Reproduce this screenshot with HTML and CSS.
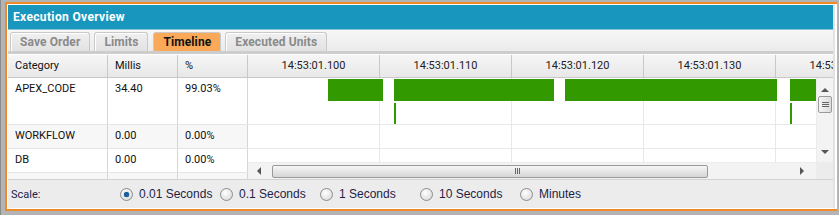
FILE: index.html
```html
<!DOCTYPE html>
<html lang="en">
<head>
    <meta charset="UTF-8">
    <title>Execution Overview</title>
    <link rel="stylesheet" href="styles.css">
</head>
<body>

<div class="frame">
  <div class="panel">
    <div class="title">Execution Overview</div>

    <div class="tabbar">
        <div class="tab">Save Order</div>
        <div class="tab">Limits</div>
        <div class="tab active">Timeline</div>
        <div class="tab">Executed Units</div>
    </div>

    <div class="main">
        <div class="grid">
            <div class="row head">
                <div class="cell cat">Category</div>
                <div class="cell ms">Millis</div>
                <div class="cell pct">%</div>
            </div>
            <div class="row tall">
                <div class="cell cat">APEX_CODE</div>
                <div class="cell ms">34.40</div>
                <div class="cell pct">99.03%</div>
            </div>
            <div class="row alt">
                <div class="cell cat">WORKFLOW</div>
                <div class="cell ms">0.00</div>
                <div class="cell pct">0.00%</div>
            </div>
            <div class="row">
                <div class="cell cat">DB</div>
                <div class="cell ms">0.00</div>
                <div class="cell pct">0.00%</div>
            </div>
            <div class="row alt">
                <div class="cell cat"></div>
                <div class="cell ms"></div>
                <div class="cell pct"></div>
            </div>
        </div>

        <div class="timeline">
            <div class="tl-head">
                <div class="tick">14:53:01.100</div>
                <div class="tick">14:53:01.110</div>
                <div class="tick">14:53:01.120</div>
                <div class="tick">14:53:01.130</div>
                <div class="tick">14:53:01.140</div>
            </div>
            <div class="tl-view">
                <div class="chart">
                    <div class="lane tall">
                        <div class="bar" style="left: 80px; width: 55px;"></div>
                        <div class="bar" style="left: 146px; width: 160px;"></div>
                        <div class="bar" style="left: 317px; width: 212px;"></div>
                        <div class="bar" style="left: 542px; width: 40px;"></div>
                        <div class="bar thin" style="left: 146px;"></div>
                        <div class="bar thin" style="left: 542px;"></div>
                    </div>
                    <div class="lane"></div>
                    <div class="lane"></div>
                </div>
                <div class="vscroll">
                    <div class="arrow up"></div>
                    <div class="vthumb"><span></span><span></span><span></span></div>
                    <div class="vtrack"></div>
                    <div class="arrow down"></div>
                </div>
            </div>
            <div class="hscroll-row">
                <div class="hscroll">
                    <div class="arrow left"></div>
                    <div class="hthumb"><span></span><span></span><span></span></div>
                    <div class="htrack"></div>
                    <div class="arrow right"></div>
                </div>
                <div class="corner"></div>
            </div>
        </div>
    </div>

    <div class="footer">
        <div class="scale-label">Scale:</div>
        <label class="opt"><span class="radio checked"></span>0.01 Seconds</label>
        <label class="opt"><span class="radio"></span>0.1 Seconds</label>
        <label class="opt"><span class="radio"></span>1 Seconds</label>
        <label class="opt"><span class="radio"></span>10 Seconds</label>
        <label class="opt"><span class="radio"></span>Minutes</label>
    </div>
  </div>
</div>

</body>
</html>
```

FILE: styles.css
```css
body {
    margin: 0;
    background: #b4b4b4;
    font-family: Roboto, "Liberation Sans", sans-serif;
    font-size: 11px;
    color: #111;
    border-left: 1px solid #8a8a8a;
    height: 215px;
    overflow: hidden;
}
.frame {
    margin: 2px 0 0 4px;
    width: 830px;
    border: 2px solid #ee8a2b;
    border-right: none;
    background: #fff;
}
.panel {
    border: 1px solid #fff;
    border-right: 2px solid #e2e2e2;
    width: 825px;
}
.title {
    height: 24px;
    line-height: 24px;
    background: #1896be;
    border-bottom: 1px solid #8ac4da;
    color: #fff;
    font-weight: bold;
    font-size: 12px;
    letter-spacing: 0.35px;
    padding-left: 5px;
}
.tabbar {
    height: 19px;
    padding: 2px 0 0 2px;
    display: flex;
    gap: 4px;
    background: linear-gradient(#f7f7f7, #ebebeb);
    border-bottom: 3px solid #cdcdcd;
}
.tab {
    height: 18px;
    line-height: 19px;
    padding: 0 9px;
    border: 1px solid #c9c9c9;
    border-bottom: none;
    border-radius: 3px 3px 0 0;
    background: linear-gradient(#f0f0f0, #e2e2e2);
    box-shadow: inset 1px 1px 0 #fff;
    color: #8a8a8a;
    font-weight: bold;
    font-size: 12px;
    letter-spacing: 0.1px;
}
.tab.active {
    background: #f9a958;
    box-shadow: none;
    color: #111;
    margin-left: 1px;
}
.main {
    height: 124px;
    margin-top: 1px;
    display: flex;
    overflow: hidden;
    border-bottom: 1px solid #d2d2d2;
}
.grid {
    width: 240px;
    flex: none;
}
.row {
    display: flex;
    height: 23px;
    border-bottom: 1px solid #e4e4e4;
    background: #fff;
}
.row.alt {
    background: #f7f7f7;
}
.row.tall {
    height: 46px;
}
.row.head {
    height: 22px;
    background: linear-gradient(#f6f6f6, #e8e8e8);
    border-bottom: 1px solid #c8c8c8;
    line-height: 22px;
}
.cell {
    border-right: 1px solid #d6d6d6;
    padding: 4px 0 0 7px;
    box-sizing: border-box;
}
.row.head .cell {
    padding-top: 0;
    border-right-color: #c8c8c8;
}
.cat { width: 100px; }
.ms { width: 70px; }
.pct { width: 70px; }
.timeline {
    width: 585px;
    flex: none;
}
.tl-head {
    display: flex;
    height: 22px;
    line-height: 22px;
    overflow: hidden;
    background: linear-gradient(#f6f6f6, #e8e8e8);
    border-bottom: 1px solid #c8c8c8;
}
.tick {
    width: 132px;
    flex: none;
    text-align: center;
    border-right: 1px solid #c8c8c8;
    box-sizing: border-box;
    color: #222;
}
.tl-view {
    display: flex;
    height: 84px;
}
.chart {
    width: 568px;
    overflow: hidden;
    background: repeating-linear-gradient(90deg, transparent 0 131px, #e8e8e8 131px 132px);
}
.lane {
    position: relative;
    height: 23px;
    border-bottom: 1px solid #e8e8e8;
}
.lane.tall {
    height: 46px;
}
.bar {
    position: absolute;
    top: 1px;
    height: 22px;
    background: #339900;
}
.bar.thin {
    top: 25px;
    height: 21px;
    width: 2px;
}
.vscroll {
    width: 17px;
    display: flex;
    flex-direction: column;
    background: #f3f3f3;
    border-left: 1px solid #ececec;
    box-sizing: border-box;
}
.arrow {
    width: 0;
    height: 0;
    margin: 0 auto;
    border: 4px solid transparent;
}
.arrow.up {
    border-bottom: 4px solid #555;
    margin-top: 6px;
    margin-bottom: 4px;
}
.arrow.down {
    border-top: 4px solid #555;
    margin-bottom: 4px;
}
.vthumb {
    margin: 0 1px;
    height: 15px;
    border: 1px solid #9a9a9a;
    border-radius: 2px;
    background: linear-gradient(90deg, #f4f4f4, #dcdcdc);
    display: flex;
    flex-direction: column;
    align-items: center;
    justify-content: center;
    gap: 1px;
}
.vthumb span {
    width: 7px;
    height: 1px;
    background: #666;
}
.vtrack {
    flex: 1;
}
.hscroll-row {
    display: flex;
    height: 17px;
}
.hscroll {
    width: 568px;
    display: flex;
    align-items: center;
    background: #f3f3f3;
    border-top: 1px solid #ececec;
    box-sizing: border-box;
}
.arrow.left {
    border-right: 4px solid #555;
    margin: 0 4px 0 5px;
}
.arrow.right {
    border-left: 4px solid #555;
    margin: 0 8px 0 0;
}
.hthumb {
    width: 436px;
    height: 13px;
    margin-left: 7px;
    border: 1px solid #9a9a9a;
    border-radius: 2px;
    background: linear-gradient(#f6f6f6, #d6d6d6);
    display: flex;
    justify-content: center;
    align-items: center;
    gap: 1px;
    padding-left: 54px;
    box-sizing: border-box;
}
.hthumb span {
    width: 1px;
    height: 6px;
    background: #666;
}
.htrack {
    flex: 1;
}
.corner {
    width: 17px;
    background: #ececec;
}
.footer {
    height: 28px;
    display: flex;
    align-items: center;
    background: #ececec;
    padding-left: 3px;
}
.scale-label {
    width: 109px;
    color: #1e1e48;
}
.opt {
    width: 100px;
    display: flex;
    align-items: center;
    font-family: "Liberation Sans", Arial, sans-serif;
    font-size: 12px;
    color: #1e1e48;
}
.radio {
    width: 11px;
    height: 11px;
    border: 1px solid #8c8c8c;
    border-radius: 50%;
    background: radial-gradient(circle at 40% 35%, #ffffff, #d4d4d4);
    margin-right: 6px;
    position: relative;
}
.radio.checked::after {
    content: "";
    position: absolute;
    left: 3px;
    top: 3px;
    width: 5px;
    height: 5px;
    border-radius: 50%;
    background: #1b5f9e;
    box-shadow: 0 0 1px #0b3d6a;
}
```
